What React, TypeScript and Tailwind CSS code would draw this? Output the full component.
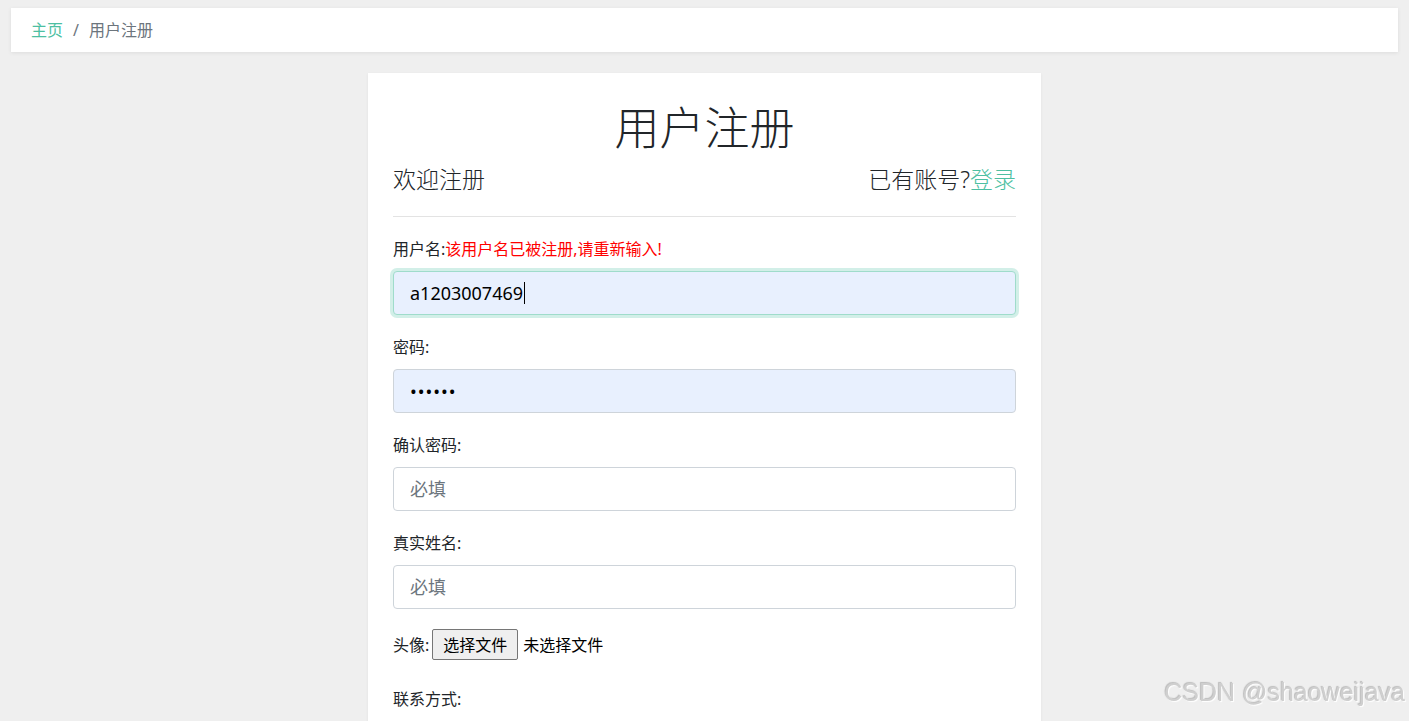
import { useState } from "react";

const font = { fontFamily: '"Noto Sans", "Noto Sans CJK SC", sans-serif' };

function Field({ label, error, children }: { label: string; error?: string; children: React.ReactNode }) {
  return (
    <div className="mb-[20px]">
      <div className="mb-[10px] text-[16px] leading-[24px] text-[#212529]">
        {label}
        {error && <span className="text-[#ff0000]">{error}</span>}
      </div>
      {children}
    </div>
  );
}

export default function App() {
  const [realName, setRealName] = useState("");
  const [confirm, setConfirm] = useState("");

  return (
    <div className="relative min-h-screen bg-[#efefef] pt-[8px]" style={font}>
      {/* Breadcrumb */}
      <div className="mx-[11px] flex h-[44px] items-center bg-white px-[20px] text-[16px] shadow-[0_1px_4px_rgba(0,0,0,0.08)]">
        <a href="#" className="text-[#4dbfa2]">主页</a>
        <span className="px-[10px] text-[#6c757d]">/</span>
        <span className="text-[#6c757d]">用户注册</span>
      </div>

      {/* Card */}
      <div className="mx-auto mt-[21px] w-[673px] bg-white px-[25px] pb-10 pt-[25px] shadow-[0_1px_3px_rgba(0,0,0,0.06)]">
        <h1 className="text-center text-[45px] font-light leading-[60px] text-[#212529]">用户注册</h1>
        <div className="mt-[5px] flex items-center justify-between text-[23px] font-light leading-[32px] text-[#212529]">
          <span>欢迎注册</span>
          <span>
            已有账号?<a href="#" className="text-[#4dbfa2]">登录</a>
          </span>
        </div>
        <hr className="mb-[20px] mt-[21px] border-t border-[#e3e3e3]" />

        <Field label="用户名:" error="该用户名已被注册,请重新输入!">
          <div className="flex h-[44px] items-center rounded-[4px] border border-[#9fdccb] bg-[#e8f0fe] px-4 text-[18px] text-black shadow-[0_0_0_3px_rgba(77,191,162,0.25)]">
            a1203007469
            <span className="ml-[1px] inline-block h-[22px] w-[1px] bg-black" />
          </div>
        </Field>

        <Field label="密码:">
          <input
            type="password"
            defaultValue="123456"
            className="h-[44px] w-full rounded-[4px] border border-[#ced4da] bg-[#e8f0fe] px-4 text-[18px] tracking-[1px] text-black outline-none"
          />
        </Field>

        <Field label="确认密码:">
          <input
            type="password"
            value={confirm}
            onChange={(e) => setConfirm(e.target.value)}
            placeholder="必填"
            className="h-[44px] w-full rounded-[4px] border border-[#ced4da] bg-white px-4 text-[18px] text-[#212529] outline-none placeholder:text-[#6c757d]"
          />
        </Field>

        <Field label="真实姓名:">
          <input
            type="text"
            value={realName}
            onChange={(e) => setRealName(e.target.value)}
            placeholder="必填"
            className="h-[44px] w-full rounded-[4px] border border-[#ced4da] bg-white px-4 text-[18px] text-[#212529] outline-none placeholder:text-[#6c757d]"
          />
        </Field>

        <div className="mb-[27px] flex items-center text-[16px] text-[#212529]">
          <span>头像:</span>
          <button className="ml-[3px] h-[31px] rounded-[2px] border border-[#767676] bg-[#efefef] px-[10px] text-[16px] text-black">
            选择文件
          </button>
          <span className="ml-[5px] text-black">未选择文件</span>
        </div>

        <div className="mb-[10px] text-[16px] leading-[24px] text-[#212529]">联系方式:</div>
        <input
          type="text"
          placeholder="必填"
          className="h-[44px] w-full rounded-[4px] border border-[#ced4da] bg-white px-4 text-[18px] outline-none placeholder:text-[#6c757d]"
        />
      </div>

      {/* watermark */}
      <div
        className="pointer-events-none fixed bottom-[10px] right-[4px] text-[25px] text-[#cfcfcf] [text-shadow:1px_1px_1px_#ffffff,-1px_-1px_1px_#bdbdbd]"
        style={{ fontFamily: '"Liberation Sans", Arial, sans-serif' }}
      >
        CSDN @shaoweijava
      </div>
    </div>
  );
}
